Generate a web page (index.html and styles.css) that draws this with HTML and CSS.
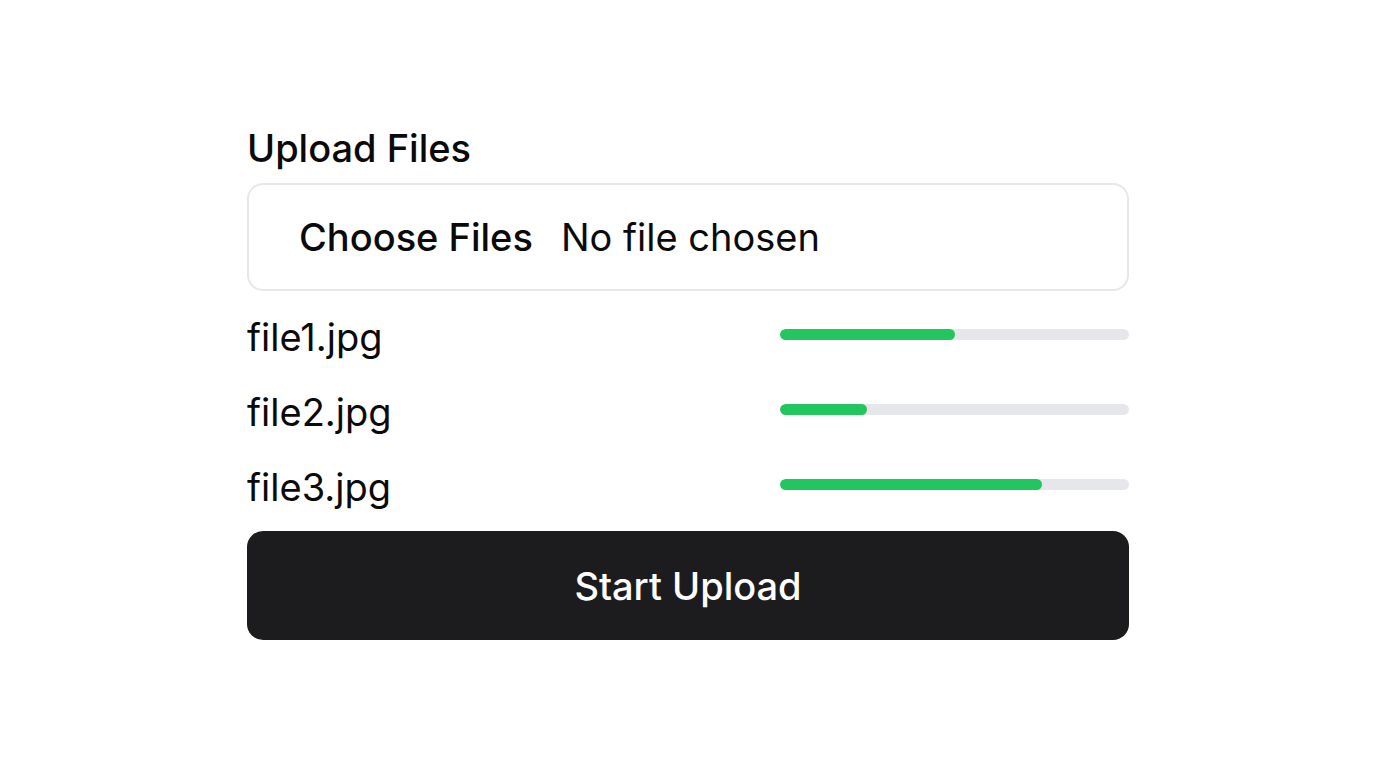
FILE: index.html
```html
<!DOCTYPE html>
<html lang="en">
<head>
<meta charset="utf-8">
<title>Upload Files</title>
<link rel="stylesheet" href="styles.css">
</head>
<body>
<main class="uploader">
  <h1 class="title">Upload Files</h1>
  <div class="picker">
    <span class="picker-btn">Choose Files</span>
    <span class="picker-status">No file chosen</span>
  </div>
  <ul class="files">
    <li class="file">
      <span class="file-name">file1.jpg</span>
      <div class="bar"><div class="bar-fill" style="width:50%"></div></div>
    </li>
    <li class="file">
      <span class="file-name">file2.jpg</span>
      <div class="bar"><div class="bar-fill" style="width:25%"></div></div>
    </li>
    <li class="file">
      <span class="file-name">file3.jpg</span>
      <div class="bar"><div class="bar-fill" style="width:75%"></div></div>
    </li>
  </ul>
  <button class="start" type="button">Start Upload</button>
</main>
</body>
</html>
```
FILE: styles.css
```css
* { box-sizing: border-box; }
html, body { margin: 0; padding: 0; background: #fff; }
body {
  font-family: Inter, "Liberation Sans", sans-serif;
  color: #0a0a0a;
}
.uploader {
  width: 882px;
  margin: 121px auto 0;
  display: flex;
  flex-direction: column;
}
.title {
  margin: 0;
  font-size: 38px;
  line-height: 54px;
  font-weight: 500;
}
.picker {
  margin-top: 8px;
  height: 108px;
  border: 2px solid #e5e7eb;
  border-radius: 16px;
  display: flex;
  align-items: center;
  padding-left: 50px;
  font-size: 38px;
  line-height: 54px;
}
.picker-btn { font-weight: 500; margin-right: 28px; }
.picker-status { font-weight: 400; }
.files {
  list-style: none;
  margin: 19px 0 0;
  padding: 0;
  display: flex;
  flex-direction: column;
  gap: 21px;
}
.file {
  display: flex;
  justify-content: space-between;
  align-items: center;
  height: 54px;
}
.file-name { font-size: 38px; line-height: 54px; font-weight: 400; }
.bar {
  width: 349px;
  height: 11px;
  border-radius: 6px;
  background: #e5e7eb;
  overflow: hidden;
  margin-top: -5px;
}
.bar-fill {
  height: 100%;
  background: #22c55e;
  border-radius: 6px;
}
.start {
  margin-top: 17px;
  height: 109px;
  border: none;
  border-radius: 16px;
  background: #1c1c1e;
  color: #fff;
  font-family: inherit;
  font-size: 38px;
  font-weight: 500;
  cursor: pointer;
}
```
